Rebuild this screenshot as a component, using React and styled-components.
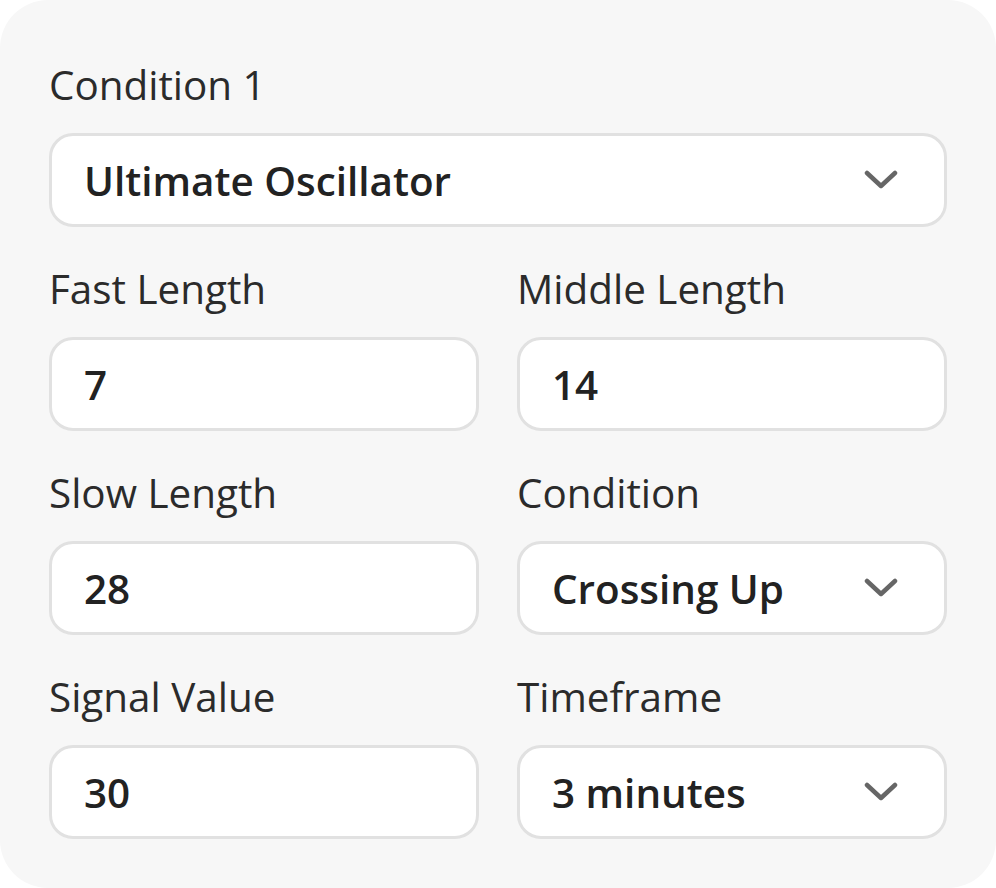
import React from 'react';
import styled, { createGlobalStyle } from 'styled-components';

const GlobalStyle = createGlobalStyle`
    html, body {
        margin: 0;
        padding: 0;
        background: #ffffff;
    }
    * { box-sizing: border-box; }
`;

const Card = styled.div`
    width: 996px;
    height: 888px;
    background: #f7f7f7;
    border-radius: 48px;
    padding: 59px 49px 49px;
    font-family: "Open Sans", "Noto Sans", sans-serif;
    display: grid;
    grid-template-columns: 1fr 1fr;
    column-gap: 38px;
    row-gap: 36px;
    align-content: start;
`;

const Field = styled.div`
    grid-column: ${(p) => (p.$wide ? '1 / span 2' : 'auto')};
    display: flex;
    flex-direction: column;
    gap: 22px;
`;

const Label = styled.div`
    font-size: 40.4px;
    line-height: 52px;
    color: #2b2b2b;
    font-weight: 400;
`;

const Box = styled.div`
    height: 94px;
    background: #ffffff;
    border: 3px solid #e1e1e1;
    border-radius: 24px;
    padding: 0 46px 0 32px;
    display: flex;
    align-items: center;
    justify-content: space-between;
    font-size: 40.4px;
    font-weight: 600;
    color: #222222;
`;

const Chevron = () => (
    <svg width="34" height="22" viewBox="0 0 34 22" fill="none">
        <path d="M3 4 L17 17 L31 4" stroke="#666666" strokeWidth="4.5" strokeLinecap="round" strokeLinejoin="round" />
    </svg>
);

const fields = [
    { label: 'Condition 1', value: 'Ultimate Oscillator', select: true, wide: true },
    { label: 'Fast Length', value: '7' },
    { label: 'Middle Length', value: '14' },
    { label: 'Slow Length', value: '28' },
    { label: 'Condition', value: 'Crossing Up', select: true },
    { label: 'Signal Value', value: '30' },
    { label: 'Timeframe', value: '3 minutes', select: true },
];

export default function App() {
    return (
        <>
            <GlobalStyle />
            <Card>
                {fields.map((f) => (
                    <Field key={f.label} $wide={f.wide}>
                        <Label>{f.label}</Label>
                        <Box>
                            <span>{f.value}</span>
                            {f.select && <Chevron />}
                        </Box>
                    </Field>
                ))}
            </Card>
        </>
    );
}
